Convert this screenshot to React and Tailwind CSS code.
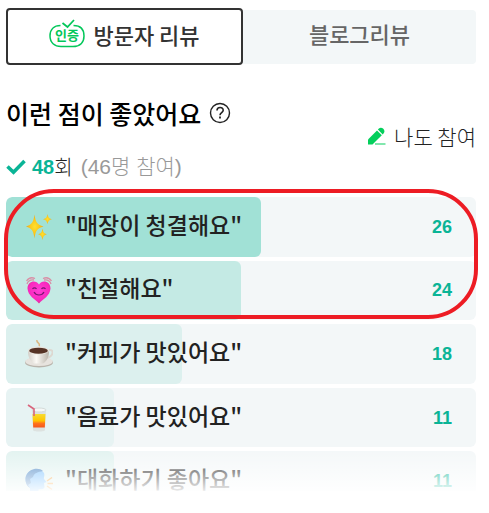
import React from "react";

function VerifiedBadge() {
  return (
    <svg width="36" height="29" viewBox="0 0 36 29" fill="none" aria-hidden="true">
      <path
        d="M11.500 6.500C5 6.500 1 10.500 1 17s4.500 10.500 11 10.500h12c6.500 0 11-3.500 11-10.500S31 6.500 24.500 6.500"
        stroke="#03c75a"
        strokeWidth="1.500"
      />
      <path d="M13.500 4l5 4L25 1" stroke="#03c75a" strokeWidth="1.800" />
      <text
        x="18"
        y="21"
        textAnchor="middle"
        fontSize="13"
        fontWeight="700"
        fill="#03c75a"
        fontFamily="'Noto Sans CJK KR', sans-serif"
      >
        인증
      </text>
    </svg>
  );
}

function HelpIcon() {
  return (
    <svg width="22" height="22" viewBox="0 0 22 22" fill="none" stroke="#222" aria-hidden="true">
      <circle cx="11" cy="11" r="9.500" strokeWidth="1.400" />
      <path d="M8 8.500c0-4 6.200-4 6.200-.3 0 2.400-3.200 2.300-3.200 5" strokeWidth="1.600" />
      <path d="M11 14.500v2" strokeWidth="1.800" />
    </svg>
  );
}

function CheckIcon() {
  return (
    <svg width="20" height="16" viewBox="0 0 20 16" fill="none" aria-hidden="true">
      <path d="M1.500 7.500l6 5.700L18.500 2" stroke="#0ab496" strokeWidth="3.600" />
    </svg>
  );
}

function PencilIcon() {
  return (
    <svg width="18" height="18" viewBox="0 0 18 18" fill="#04cf5c" aria-hidden="true">
      <path d="M0 17.500v-5L9 3.500l4.800 4.800-9.300 9.200z" />
      <path d="M9.900 2.600l1-1c2.700-2.700 7.400 1.800 4.800 4.600l-1 1.200z" />
      <path d="M7 16.500h10.500v1H7z" />
    </svg>
  );
}

function Sparkles() {
  return (
    <svg width="28" height="28" viewBox="0 0 28 28" aria-hidden="true">
      <defs>
        <radialGradient id="gold">
          <stop offset="0" stopColor="#ffe02e" />
          <stop offset="0.600" stopColor="#fac51b" />
          <stop offset="1" stopColor="#e5a52a" />
        </radialGradient>
      </defs>
      <g fill="url(#gold)">
        <path d="M9.500 1.500c1 7.500 2.800 10.500 9 12-6.200 1.500-8 4.500-9 12-1-7.500-2.800-10.500-8.500-12 5.700-1.500 7.500-4.500 8.500-12z" />
        <path d="M22.500 1c.7 3.600 1.700 4.500 4.500 5.200-2.800.7-3.800 1.700-4.500 5-.7-3.300-1.700-4.300-4.500-5 2.800-.7 3.800-1.600 4.500-5.200z" />
        <path d="M17.500 15.500c.7 4 1.700 5 4.500 5.800-2.800.8-3.800 1.900-4.500 5.700-.7-3.800-1.700-4.900-4.500-5.700 2.800-.8 3.800-1.800 4.500-5.800z" />
      </g>
    </svg>
  );
}

function BeatingHeart() {
  return (
    <svg width="28" height="28" viewBox="0 0 28 28" fill="none" aria-hidden="true">
      <defs>
        <radialGradient id="pink" cx="0.500" cy="0.400" r="0.650">
          <stop offset="0" stopColor="#ff3ed6" />
          <stop offset="0.700" stopColor="#f928bd" />
          <stop offset="1" stopColor="#cf397f" />
        </radialGradient>
      </defs>
      <path
        d="M14 27.500C10 23 3 20 2.500 12.500 2.500 5 11 3.500 14 8.500 17 3.500 25.500 5 25.500 12.500 25 20 18 23 14 27.500z"
        fill="url(#pink)"
      />
      <path
        d="M2 8C3 5 5.500 3.500 9 4M1.500 5C3.500 2 6.500 1 10 2.500M26 8c-1-3-3.500-4.500-7-4M26.500 5C24.500 2 21.500 1 18 2.500"
        stroke="#d98fa6"
        strokeWidth="1.300"
      />
      <path
        d="M7.500 13c1-1.500 3-1.500 4 0M16.500 13c1-1.500 3-1.500 4 0M9 16c2 4 8 4 10 0"
        stroke="#7a1670"
        strokeWidth="1.200"
      />
    </svg>
  );
}

function Coffee() {
  return (
    <svg width="28" height="28" viewBox="0 0 28 28" aria-hidden="true">
      <defs>
        <linearGradient id="china">
          <stop offset="0" stopColor="#d3cec7" />
          <stop offset="0.400" stopColor="#fbf9f5" />
          <stop offset="1" stopColor="#bbb5ab" />
        </linearGradient>
      </defs>
      <ellipse cx="14" cy="22.500" rx="14" ry="5" fill="#b9b4ac" />
      <ellipse cx="14" cy="21.500" rx="13.700" ry="4.600" fill="#e7e3de" />
      <path d="M24 10c5-1 5 6-2 8" fill="none" stroke="#ddd8d1" strokeWidth="2" />
      <path d="M3 11c0 6 2 10 6 12.500h9c4-2.500 6-6.500 6-12.500z" fill="url(#china)" />
      <ellipse cx="13.500" cy="10.500" rx="10.500" ry="4" fill="#e9e4dc" />
      <ellipse cx="13.500" cy="10.700" rx="9.300" ry="3" fill="#563325" />
      <path d="M12 0c-1 3 4 3 2 6" fill="none" stroke="#dcb781" strokeWidth="1.500" />
    </svg>
  );
}

function Juice() {
  return (
    <svg width="28" height="28" viewBox="0 0 28 28" fill="none" aria-hidden="true">
      <defs>
        <linearGradient id="sunrise" x2="0" y2="1">
          <stop offset="0" stopColor="#f7dc30" />
          <stop offset="0.500" stopColor="#ffc400" />
          <stop offset="0.700" stopColor="#ff721c" />
          <stop offset="1" stopColor="#f4561d" />
        </linearGradient>
      </defs>
      <path d="M7 6h14l-1 20c0 2-12 2-12 0z" fill="#dde2e0" />
      <ellipse cx="14" cy="6" rx="7" ry="2" fill="#f6f8f7" stroke="#d4dbd9" />
      <path d="M7.500 10h13l-.7 13.500H8.200z" fill="url(#sunrise)" />
      <path d="M3 1l6 4v7" stroke="#d9647c" strokeWidth="1.600" />
    </svg>
  );
}

function SpeakingHead() {
  return (
    <svg width="28" height="28" viewBox="0 0 28 28" fill="none" aria-hidden="true">
      <path
        d="M5 27v-6C0 18 0 11 1 9 4 1 16 0 19 6c1 3-.5 4 0 6l2.500 3-2.500 1 .5 4c-.5 3-4 2-6 2.500V27z"
        fill="#7cc2ff"
      />
      <path
        d="M5 21C0 18 0 11 1 9 4 1 14 0 18 4 13 5 9 6 8 10l-3 2 1 4-3 2z"
        fill="#4a86c5"
      />
      <path d="M22 14l5-3.500M22.500 16.500H28M22 19l5 3.500" stroke="#f8a23c" strokeWidth="1.500" />
    </svg>
  );
}

const reviews = [
  { label: "매장이 청결해요", count: 26, width: 54.3, fill: "bg-[#a1e1d6]", Icon: Sparkles },
  { label: "친절해요", count: 24, width: 50, fill: "bg-[#c4eae4]", Icon: BeatingHeart },
  { label: "커피가 맛있어요", count: 18, width: 37.5, fill: "bg-[#dcf0ee]", Icon: Coffee },
  { label: "음료가 맛있어요", count: 11, width: 23, fill: "bg-[#e7f3f3]", Icon: Juice },
  { label: "대화하기 좋아요", count: 11, width: 23, fill: "bg-[#e0f2ef]", Icon: SpeakingHead },
];

function ReviewRow({ label, count, width, fill, Icon }) {
  return (
    <li className="grid overflow-hidden rounded-md bg-[#f3f7f8]">
      <div
        className={`col-start-1 row-start-1 rounded-md ${fill}`}
        style={{ width: `${width}%` }}
      />
      <div className="col-start-1 row-start-1 flex items-center pr-6 pl-[19px]">
        <Icon />
        <span className="ml-3 pb-1.5 text-[23px] leading-8 font-medium text-[#222]">
          "{label}"
        </span>
        <span className="ml-auto font-['Liberation_Sans',sans-serif] text-lg font-bold text-[#0ab496]">
          {count}
        </span>
      </div>
    </li>
  );
}

export default function App() {
  return (
    <main className="bg-white pt-2 pr-[13px] pb-5 pl-1.5 font-['Noto_Sans_CJK_KR',sans-serif]">
      <nav className="flex items-center text-[22px] leading-8 font-medium">
        <button
          type="button"
          className="flex h-[57px] flex-1 items-center justify-center gap-2 rounded border-2 border-[#333] bg-white pb-1.5 text-[#333]"
        >
          <VerifiedBadge />
          방문자 리뷰
        </button>
        <button
          type="button"
          className="h-[54px] flex-1 rounded-r bg-[#f3f7f8] pb-2 text-[#666]"
        >
          블로그리뷰
        </button>
      </nav>

      <section className="pt-8">
        <div className="flex justify-between">
          <div>
            <h2 className="flex items-center gap-2 text-[25px] leading-8 font-medium text-black">
              이런 점이 좋았어요
              <button type="button" aria-label="도움말">
                <HelpIcon />
              </button>
            </h2>
            <p className="mt-[22px] flex items-center text-xl leading-8 font-light text-[#222]">
              <CheckIcon />
              <strong className="ml-1.5 font-['Liberation_Sans',sans-serif] font-bold text-[#0ab496]">
                48
              </strong>
              회
              <span className="ml-2 font-['Liberation_Sans','Noto_Sans_CJK_KR',sans-serif] text-[21px] text-[#999]">
                (46명 참여)
              </span>
            </p>
          </div>
          <a
            href="#review"
            className="flex items-center gap-2 self-center pb-2 text-[21px] leading-8 font-light text-[#222]"
          >
            <PencilIcon />
            나도 참여
          </a>
        </div>

        <div className="relative mt-3.5">
          <ul className="grid h-[314px] auto-rows-fr gap-1">
            {reviews.map((review) => (
              <ReviewRow key={review.label} {...review} />
            ))}
          </ul>
          <div className="absolute -inset-x-0.5 -top-2 h-[130px] rounded-[50px] border-4 border-[#ed1c24]" />
          <div className="absolute inset-x-0 bottom-5 h-10 bg-linear-to-b from-white/10 to-white/90" />
          <div className="absolute inset-x-0 bottom-0 h-5 bg-white" />
        </div>
      </section>
    </main>
  );
}
